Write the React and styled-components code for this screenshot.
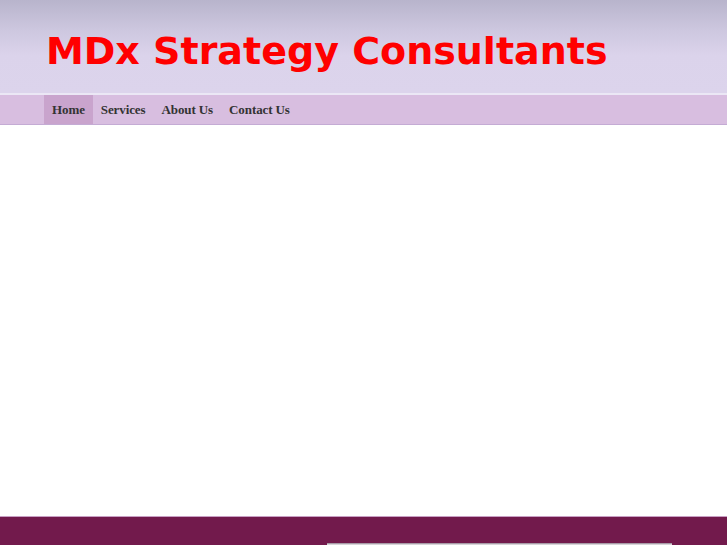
import React from "react";
import styled, { createGlobalStyle } from "styled-components";

const Global = createGlobalStyle`
  html, body {
    margin: 0;
    padding: 0;
    background: #ffffff;
  }
`;

const Page = styled.div`
  display: flex;
  flex-direction: column;
  min-height: 545px;
`;

const Header = styled.header`
  height: 95px;
  background: linear-gradient(to bottom, #b8b4cc 0px, #cdc7df 30px, #dbd3eb 55px, #dcd4ec 93px);
  border-bottom: 2px solid #ebe7f5;
  box-sizing: border-box;
  padding: 28px 0 0 46px;
`;

const Title = styled.h1`
  margin: 0;
  font-family: "DejaVu Sans", sans-serif;
  font-weight: bold;
  font-size: 38px;
  line-height: 46px;
  color: #ff0000;
`;

const Nav = styled.nav`
  height: 30px;
  background: #d8bee0;
  border-bottom: 1px solid #c4abd4;
  box-sizing: border-box;
  display: flex;
  padding-left: 44px;
`;

const NavItem = styled.a`
  display: flex;
  align-items: center;
  padding: 0 8px;
  font-family: "Liberation Serif", serif;
  font-weight: bold;
  font-size: 13px;
  letter-spacing: -0.1px;
  color: #333333;
  text-decoration: none;
  background: ${(p) => (p.$active ? "#c9a4cd" : "transparent")};
`;

const Content = styled.main`
  flex: 1;
  background: #ffffff;
`;

const Footer = styled.footer`
  height: 28px;
  background: #721a4c;
  border-top: 1px solid #c9a0c4;
  display: flex;
  justify-content: flex-start;
  padding-left: 327px;
  overflow: hidden;
`;

const FooterBox = styled.div`
  margin-top: 26px;
  width: 345px;
  height: 40px;
  background: #d8d4d8;
  border-top: 1px solid #a89ca8;
`;

export default function App() {
  return (
    <Page>
      <Global />
      <Header>
        <Title>MDx Strategy Consultants</Title>
      </Header>
      <Nav>
        <NavItem href="#" $active>Home</NavItem>
        <NavItem href="#">Services</NavItem>
        <NavItem href="#">About Us</NavItem>
        <NavItem href="#">Contact Us</NavItem>
      </Nav>
      <Content />
      <Footer>
        <FooterBox />
      </Footer>
    </Page>
  );
}
